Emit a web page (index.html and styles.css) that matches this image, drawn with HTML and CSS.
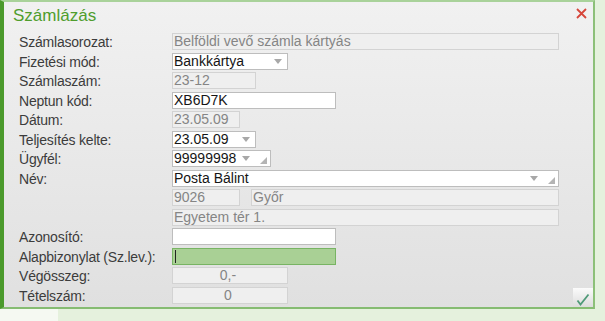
FILE: index.html
```html
<!DOCTYPE html>
<html>
<head>
    <title>Számlázás</title>
    <meta charset="utf-8">
    <link rel="stylesheet" href="styles.css">
</head>
<body>
    <div class="screen">
        <div class="dialog">
            <div class="dialog-head">
                <h1 class="title">Számlázás</h1>
                <span class="close">
                    <svg width="11" height="11" viewBox="0 0 11 11"><path d="M1 1 L10 10 M10 1 L1 10" stroke="#d6463a" stroke-width="1.8" fill="none"/></svg>
                </span>
            </div>

            <div class="form">
                <div class="row">
                    <span class="label">Számlasorozat:</span>
                    <span class="field ro w-full">Belföldi vevő számla kártyás</span>
                </div>
                <div class="row">
                    <span class="label">Fizetési mód:</span>
                    <span class="field w-116">Bankkártya<span class="arrow"></span></span>
                </div>
                <div class="row">
                    <span class="label">Számlaszám:</span>
                    <span class="field ro w-84">23-12</span>
                </div>
                <div class="row">
                    <span class="label">Neptun kód:</span>
                    <span class="field w-164">XB6D7K</span>
                </div>
                <div class="row">
                    <span class="label">Dátum:</span>
                    <span class="field ro w-68">23.05.09</span>
                </div>
                <div class="row">
                    <span class="label">Teljesítés kelte:</span>
                    <span class="field w-84">23.05.09<span class="arrow"></span></span>
                </div>
                <div class="row">
                    <span class="label">Ügyfél:</span>
                    <span class="field w-99">99999998<span class="arrow"></span><span class="grip"></span></span>
                </div>
                <div class="row">
                    <span class="label">Név:</span>
                    <span class="field w-full">Posta Bálint<span class="arrow"></span><span class="grip"></span></span>
                </div>
                <div class="row">
                    <span class="label"></span>
                    <span class="field ro w-68">9026</span>
                    <span class="field ro w-city">Győr</span>
                </div>
                <div class="row">
                    <span class="label"></span>
                    <span class="field ro w-full">Egyetem tér 1.</span>
                </div>
                <div class="row">
                    <span class="label">Azonosító:</span>
                    <span class="field w-164"></span>
                </div>
                <div class="row">
                    <span class="label">Alapbizonylat (Sz.lev.):</span>
                    <span class="field focus w-164"><span class="caret"></span></span>
                </div>
                <div class="row">
                    <span class="label">Végösszeg:</span>
                    <span class="field ro num w-116">0,-</span>
                </div>
                <div class="row">
                    <span class="label">Tételszám:</span>
                    <span class="field ro num w-116">0</span>
                    <span class="ok">
                        <svg width="14" height="13" viewBox="0 0 14 13"><path d="M1.5 7.5 L4.5 11.5 L12.5 1.5" stroke="#4f9a78" stroke-width="1.8" fill="none"/></svg>
                    </span>
                </div>
            </div>
        </div>
        <div class="shore"><span class="shore-left"></span></div>
    </div>
</body>
</html>
```

FILE: styles.css
```css
body {
    margin: 0;
    padding: 0;
    background-color: #e5f1dd;
    font-family: "Liberation Sans", Arial, sans-serif;
}

.screen {
    width: 605px;
    height: 321px;
    overflow: hidden;
}

.dialog {
    width: 595px;
    box-sizing: border-box;
    border-top: 2px solid #a9d29a;
    border-left: 4px solid #4b9a2c;
    border-right: 2px solid #8cc078;
    border-bottom: 2px solid #86bc72;
    background: linear-gradient(#f1f1f1, #e0e0e0);
    padding-bottom: 1px;
}

.dialog-head {
    display: flex;
    justify-content: space-between;
    height: 20px;
    padding: 4px 6px 0 9px;
}

.title {
    margin: 0;
    font-size: 17px;
    font-weight: normal;
    line-height: 20px;
    color: #4f9d2d;
}

.close {
    margin-top: 2px;
    width: 11px;
    height: 11px;
}

.close svg {
    display: block;
}

.form {
    margin-top: 7px;
    padding-left: 15px;
}

.row {
    display: flex;
    align-items: flex-start;
    height: 19.5px;
}

.label {
    width: 153px;
    flex: none;
    padding-top: 1px;
    font-size: 14px;
    line-height: 17px;
    letter-spacing: -0.2px;
    color: #3c3c3c;
    white-space: nowrap;
}

.field {
    display: flex;
    align-items: center;
    flex: none;
    box-sizing: border-box;
    height: 17px;
    padding: 0 5px 0 1px;
    border: 1px solid #bdbdbd;
    background-color: #fff;
    font-size: 14px;
    line-height: 15px;
    color: #151515;
    white-space: nowrap;
    overflow: hidden;
}

.field.ro {
    background-color: #efefef;
    border-color: #d3d3d3;
    color: #858585;
}

.field.num {
    justify-content: center;
}

.field.focus {
    background-color: #a9d095;
    border-color: #78b463;
}

.caret {
    width: 1px;
    height: 13px;
    margin-left: 1px;
    background-color: #222;
}

.arrow {
    margin-left: auto;
    width: 0;
    height: 0;
    border-left: 4px solid transparent;
    border-right: 4px solid transparent;
    border-top: 5px solid #a8a8a8;
}

.grip {
    align-self: flex-end;
    margin: 0 -2px 2px 10px;
    width: 0;
    height: 0;
    border-left: 7px solid transparent;
    border-bottom: 7px solid #b4b4b4;
}

.w-full { width: 387px; }
.w-city { width: 308px; margin-left: 11px; }
.w-164 { width: 164px; }
.w-116 { width: 116px; }
.w-99 { width: 99px; }
.w-84 { width: 84px; }
.w-68 { width: 68px; }

.ok {
    display: flex;
    align-items: center;
    justify-content: center;
    margin: 1.5px 0 0 auto;
    width: 20px;
    height: 19px;
    background: linear-gradient(#fbfbfb, #dcdcdc);
}

.ok svg {
    display: block;
    margin-top: 3px;
}

.shore {
    height: 12px;
    display: flex;
}

.shore-left {
    width: 58px;
    background-color: #f5f9f2;
}
```
